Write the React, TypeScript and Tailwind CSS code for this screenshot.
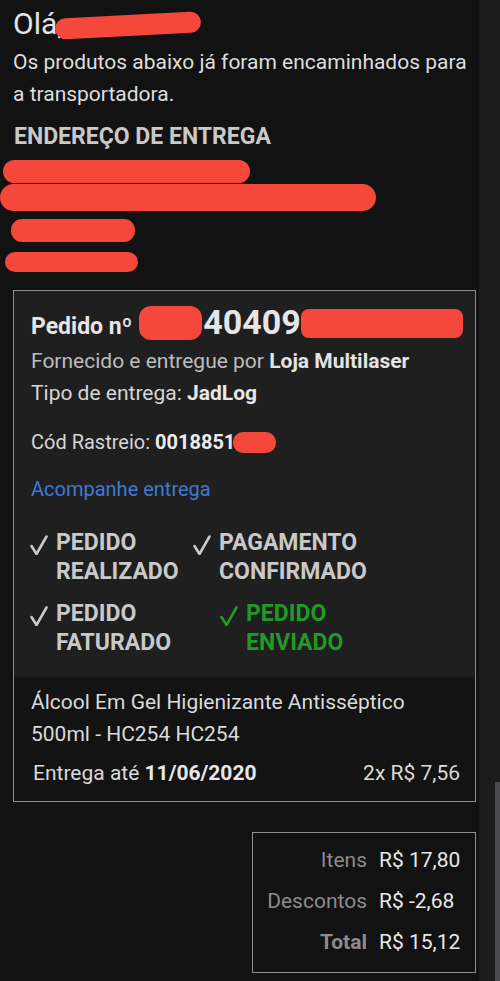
import React from "react";

const Check = ({ className = "" }: { className?: string }) => (
    <svg width="18" height="20" viewBox="0 0 18 20" fill="none" className={className}>
        <path d="M1.5 11 L6.5 19 L16.5 1.5" stroke="currentColor" strokeWidth="2.6" strokeLinecap="round" strokeLinejoin="round" />
    </svg>
);

const Status = ({ top, bottom, green = false, className = "" }: { top: string; bottom: string; green?: boolean; className?: string }) => (
    <div className={`flex gap-[8px] ${green ? "text-[#1f9a24]" : "text-[#c9c9c9]"} ${className}`}>
        <Check className="mt-[7px] shrink-0" />
        <div className="text-[23px] font-bold leading-[29px]">
            <div>{top}</div>
            <div>{bottom}</div>
        </div>
    </div>
);

export default function App() {
    return (
        <div className="flex min-h-[981px] w-[500px] bg-[#121212] font-['Roboto',sans-serif]">
            <div className="w-[479px] shrink-0">
                {/* Greeting */}
                <div className="mt-[9px] flex items-center pl-[13px]">
                    <span className="text-[30px] leading-[30px] text-[#e4e4e4]">Olá,</span>
                    <div className="-ml-[8px] mt-[3px] h-[21px] w-[146px] -rotate-3 rounded-full bg-[#f4483c]"></div>
                </div>
                <p className="mt-[7px] pl-[13px] text-[21px] leading-[32px] text-[#dedede]">
                    Os produtos abaixo já foram encaminhados para a transportadora.
                </p>

                {/* Address */}
                <h2 className="mt-[13px] pl-[14px] text-[23px] font-bold leading-[28px] text-[#c9c9c9]">
                    ENDEREÇO DE ENTREGA
                </h2>
                <div className="mt-[9px] flex flex-col">
                    <div className="ml-[3px] h-[23px] w-[247px] rounded-[12px] bg-[#f4483c]"></div>
                    <div className="mt-[1px] h-[27px] w-[376px] rounded-[14px] bg-[#f4483c]"></div>
                    <div className="ml-[11px] mt-[8px] h-[23px] w-[124px] rounded-[11px] bg-[#f4483c]"></div>
                    <div className="ml-[5px] mt-[10px] h-[20px] w-[133px] rounded-[10px] bg-[#f4483c]"></div>
                </div>

                {/* Order card */}
                <div className="ml-[13px] mt-[18px] w-[463px] border border-[#8e8e8e]">
                    <div className="bg-[#1f1f1f] pb-[19px] pl-[17px] pt-[11px]">
                        <div className="flex items-baseline">
                            <span className="text-[23px] font-bold text-[#e6e6e6]">Pedido nº</span>
                            <div className="ml-[7px] h-[34px] w-[63px] self-center rounded-[12px] bg-[#f4483c]"></div>
                            <span className="ml-[1px] text-[34px] font-bold leading-[40px] text-[#e6e6e6]">40409</span>
                            <div className="h-[29px] w-[162px] self-center rounded-[8px] bg-[#f4483c]"></div>
                        </div>
                        <div className="text-[21px] leading-[32px] text-[#bdbdbd]">
                            Fornecido e entregue por <span className="font-bold text-[#e4e4e4]">Loja Multilaser</span>
                        </div>
                        <div className="text-[21px] leading-[32px] text-[#d6d6d6]">
                            Tipo de entrega: <span className="font-bold text-[#e8e8e8]">JadLog</span>
                        </div>
                        <div className="mt-[21px] flex items-center text-[20px] leading-[24px] text-[#d6d6d6]">
                            <span>
                                Cód Rastreio: <span className="font-bold text-[#ececec]">0018851</span>
                            </span>
                            <div className="-ml-[2px] mt-[2px] h-[21px] w-[43px] rounded-[10px] bg-[#f4483c]"></div>
                        </div>
                        <div className="mt-[23px] text-[20px] leading-[24px] text-[#3d7ad6]">Acompanhe entrega</div>

                        <div className="-ml-[1px] mt-[27px] grid grid-cols-[163px_1fr] gap-y-[13px]">
                            <Status top="PEDIDO" bottom="REALIZADO" />
                            <Status top="PAGAMENTO" bottom="CONFIRMADO" />
                            <Status top="PEDIDO" bottom="FATURADO" />
                            <Status top="PEDIDO" bottom="ENVIADO" green className="ml-[27px]" />
                        </div>
                    </div>
                    <div className="border-t-2 border-[#181818] bg-[#131313] pb-[12px] pl-[17px] pr-[15px] pt-[8px] text-[21px] leading-[32px] text-[#dadada]">
                        <div>Álcool Em Gel Higienizante Antisséptico</div>
                        <div>500ml - HC254 HC254</div>
                        <div className="mt-[7px] flex justify-between pl-[2px]">
                            <span>
                                Entrega até <span className="font-bold text-[#e8e8e8]">11/06/2020</span>
                            </span>
                            <span>2x R$ 7,56</span>
                        </div>
                    </div>
                </div>

                {/* Totals */}
                <div className="ml-[252px] mt-[30px] w-[224px] border border-[#8e8e8e] pb-[9px] pr-[14px] pt-[7px]">
                    <div className="grid grid-cols-[1fr_82px] gap-x-[12px] text-[21px] leading-[41px]">
                        <span className="text-right text-[#8c8c8c]">Itens</span>
                        <span className="text-[#e8e8e8]">R$ 17,80</span>
                        <span className="text-right text-[#8c8c8c]">Descontos</span>
                        <span className="text-[#e8e8e8]">R$ -2,68</span>
                        <span className="text-right font-bold text-[#8c8c8c]">Total</span>
                        <span className="text-[#e8e8e8]">R$ 15,12</span>
                    </div>
                </div>
            </div>

            {/* Scroll strip */}
            <div className="flex w-[21px] flex-col bg-[#1b1b1c]">
                <div className="h-[782px]"></div>
                <div className="ml-auto h-[199px] w-[5px] bg-[#4a4a4c]"></div>
            </div>
        </div>
    );
}
